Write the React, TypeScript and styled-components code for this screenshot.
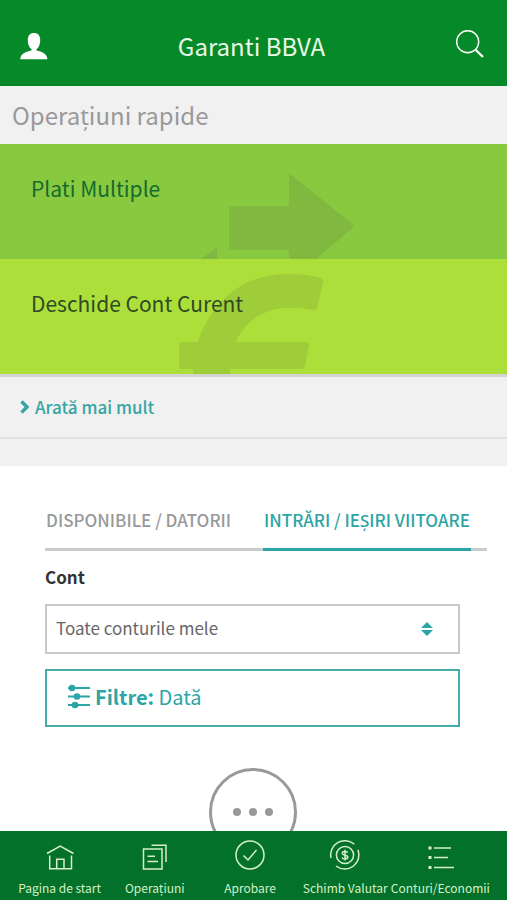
import React from "react";
import styled, { createGlobalStyle } from "styled-components";

const teal = "#2ba5a5";

const GlobalStyle = createGlobalStyle`
  *, *::before, *::after { box-sizing: border-box; }
  body { margin: 0; background: #fff; }
  body, button, select {
    font-family: "Noto Sans CJK SC", "Noto Sans", sans-serif;
  }
  button { border: 0; padding: 0; background: none; cursor: pointer; }
  svg { display: block; }
`;

const Screen = styled.div`
  display: flex;
  flex-direction: column;
  height: 100vh;
`;

const Header = styled.header`
  flex: none;
  display: flex;
  align-items: center;
  justify-content: space-between;
  padding: 27px 20px 21px;
  background: #068a29;
  color: #e9f8e4;
`;

const HeaderTitle = styled.h1`
  margin: 0;
  font-size: 24px;
  line-height: 38px;
  font-weight: 400;
`;

const IconButton = styled.button`
  color: #fff;
`;

const Content = styled.main`
  flex: 1;
  min-height: 0;
  overflow-y: auto;
  scrollbar-width: none;
`;

const SectionTitle = styled.h2`
  margin: 0;
  padding: 12px;
  background: #f1f1f1;
  color: #999;
  font-size: 24px;
  line-height: 34px;
  font-weight: 400;
`;

const Tile = styled.button<{ $bg: string; $ink: string }>`
  position: relative;
  display: flex;
  align-items: flex-start;
  width: 100%;
  height: 115px;
  padding: 29px 31px;
  overflow: hidden;
  background: ${(p) => p.$bg};
  color: ${(p) => p.$ink};
  font-size: 21px;
  line-height: 30px;
  text-align: left;
`;

const TileArt = styled.svg`
  position: absolute;
  top: 0;
  left: 50%;
  transform: translateX(-50%);
`;

const TileLabel = styled.span`
  position: relative;
`;

const MoreBar = styled.div`
  padding: 16px 20px;
  border-top: 3px solid #d3d3d3;
  border-bottom: 2px solid #e2e2e2;
  background: #f1f1f1;
`;

const MoreLink = styled.a`
  display: inline-flex;
  align-items: center;
  gap: 6px;
  color: #36a5a5;
  font-size: 17px;
  line-height: 28px;
  font-weight: 500;
  text-decoration: none;
`;

const Spacer = styled.div`
  height: 27px;
  background: #f1f1f1;
`;

const Accounts = styled.section`
  padding: 36px 20px 0 45px;
`;

const Tabs = styled.div`
  display: flex;
  gap: 31px;
  box-shadow: inset 0 -3px #c9cccc;
`;

const Tab = styled.button<{ $active?: boolean }>`
  padding: 5px 1px 15px;
  border-bottom: 3px solid ${(p) => (p.$active ? teal : "transparent")};
  color: ${(p) => (p.$active ? teal : "#999")};
  font-size: 17px;
  line-height: 26px;
  font-weight: 500;
  white-space: nowrap;
`;

const Form = styled.form`
  display: flex;
  flex-direction: column;
  margin-right: 27px;
`;

const Label = styled.label`
  padding: 13px 0 14px;
  color: #333;
  font-size: 17px;
  line-height: 26px;
  font-weight: 700;
`;

const SelectBox = styled.div`
  position: relative;
`;

const Select = styled.select`
  appearance: none;
  display: block;
  width: 100%;
  height: 50px;
  padding: 0 48px 4px 9px;
  border: 2px solid #c6c9c9;
  border-radius: 0;
  background: #fff;
  color: #666;
  font-size: 17px;
`;

const SelectArrows = styled.svg`
  position: absolute;
  top: 18px;
  right: 27px;
  pointer-events: none;
`;

const FilterButton = styled.button`
  display: flex;
  align-items: center;
  gap: 4px;
  height: 58px;
  margin-top: 15px;
  padding: 0 20px 2px;
  border: 2px solid #45acac;
  color: ${teal};
  font-size: 20px;
  line-height: 30px;
`;

const MoreButton = styled.button`
  display: flex;
  align-items: center;
  justify-content: center;
  gap: 8px;
  width: 88px;
  height: 88px;
  margin: 41px auto 24px;
  border: 3px solid #999;
  border-radius: 50%;
`;

const Dot = styled.span`
  width: 8px;
  height: 8px;
  border-radius: 50%;
  background: #999;
`;

const BottomNav = styled.nav`
  flex: none;
  display: grid;
  grid-template-columns: repeat(5, minmax(0, 1fr));
  padding: 8px 19px 0 12px;
  height: 69px;
  background: #04712a;
`;

const NavItem = styled.a`
  display: flex;
  flex-direction: column;
  align-items: center;
  gap: 7px;
  color: #d5f0c8;
  font-size: 12px;
  line-height: 20px;
  text-decoration: none;
  white-space: nowrap;
`;

const NavIcon = ({ children }: { children: React.ReactNode }) => (
  <svg width="32" height="32" viewBox="0 0 32 32" fill="none" stroke="currentColor" strokeWidth="1.5" aria-hidden="true">
    {children}
  </svg>
);

const navItems = [
  {
    label: "Pagina de start",
    icon: (
      <>
        <path d="M3 14.500 16.200 7l13.300 7.500M5.700 16.500v13.300h21.800V16.500" />
        <path d="M12.700 29.500v-9.300h7.300v9.300" />
      </>
    ),
  },
  {
    label: "Operațiuni",
    icon: (
      <>
        <path d="M4.500 10h18.500v20H4.500zM12.500 6.300H27V23" />
        <path d="M8.500 17.200h7.500M8.500 22.500h10.500" />
      </>
    ),
  },
  {
    label: "Aprobare",
    icon: (
      <>
        <circle cx="16" cy="16" r="14" />
        <path d="m9.500 16.500 4.500 4.500 8.500-10" />
      </>
    ),
  },
  {
    label: "Schimb Valutar",
    icon: (
      <>
        <path d="M2 19A14.200 14.200 0 0 1 25.300 5.300M29 10.700A14.200 14.200 0 0 1 7 27" />
        <circle cx="16" cy="16" r="8.600" />
        <path d="M18.800 13.700c-.6-1-1.600-1.300-2.800-1.300-1.600 0-2.700.7-2.700 1.900 0 2.600 5.500 1.200 5.500 3.800 0 1.200-1.200 1.900-2.800 1.900-1.400 0-2.400-.4-3-1.400M16 10.800v10.700" />
      </>
    ),
  },
  {
    label: "Conturi/Economii",
    icon: (
      <>
        <path d="M10 9h17M10 18.500h14M10 28.500h20" />
        <path d="M4.500 9h3M4.500 18.500h3M4.500 28.500h3" strokeWidth="3" />
      </>
    ),
  },
];

export default function App() {
  return (
    <Screen>
      <GlobalStyle />
      <Header>
        <IconButton aria-label="Profil">
          <svg width="28" height="28" viewBox="0 0 28 28" fill="currentColor">
            <path d="M14 1c-4 0-6.200 2.600-6.200 7.200 0 3.900 1.300 7.200 3.700 9V18.500C6 19.800.6 21.500.2 27.200h27.200C27 21.500 22 19.800 16.500 18.500v-1.300c2.400-1.800 3.700-5.100 3.700-9C20.200 3.600 18 1 14 1z" />
          </svg>
        </IconButton>
        <HeaderTitle>Garanti BBVA</HeaderTitle>
        <IconButton aria-label="Caută">
          <svg width="32" height="32" viewBox="0 0 32 32" fill="none" stroke="currentColor">
            <circle cx="12.700" cy="11.700" r="11" strokeWidth="1.400" />
            <path d="m20.300 19.500 7.700 7.500" strokeWidth="2.400" />
          </svg>
        </IconButton>
      </Header>

      <Content>
        <SectionTitle>Operațiuni rapide</SectionTitle>
        <Tile $bg="#89c940" $ink="#136b2d">
          <TileArt width="200" height="115" viewBox="0 0 200 115" fill="#80b840" aria-hidden="true">
            <path d="M75 62h60V29l66 53-39 33h-27v-9H75zM47 115l16-12v12z" />
          </TileArt>
          <TileLabel>Plati Multiple</TileLabel>
        </Tile>
        <Tile $bg="#addf3a" $ink="#2f4a24">
          <TileArt width="200" height="115" viewBox="0 0 200 115" fill="#9fcc39" aria-hidden="true">
            <path d="M44 83C59 38 94 14 135 15q17 0 32 4 3 1 2 5l-6 25q-1 3-4 2-17-3-29-2C104 51 88 68 82 83h70q4 0 3 4l-4 20q-1 3-4 3H76v5H39v-5H27q-2 0-2-3V86q0-3 3-3z" />
          </TileArt>
          <TileLabel>Deschide Cont Curent</TileLabel>
        </Tile>
        <MoreBar>
          <MoreLink href="#operatiuni">
            <svg width="9" height="14" viewBox="0 0 9 14" fill="none" stroke="currentColor" strokeWidth="3.400" aria-hidden="true">
              <path d="m1.500 1.500 5.500 5.500-5.500 5.500" />
            </svg>
            Arată mai mult
          </MoreLink>
        </MoreBar>
        <Spacer />

        <Accounts>
          <Tabs role="tablist">
            <Tab role="tab" aria-selected={false}>DISPONIBILE / DATORII</Tab>
            <Tab role="tab" aria-selected $active>INTRĂRI / IEȘIRI VIITOARE</Tab>
          </Tabs>
          <Form>
            <Label htmlFor="cont">Cont</Label>
            <SelectBox>
              <Select id="cont">
                <option>Toate conturile mele</option>
              </Select>
              <SelectArrows width="12" height="14" viewBox="0 0 12 14" fill={teal} aria-hidden="true">
                <path d="M6 0l6 6H0zM6 14l6-6H0z" />
              </SelectArrows>
            </SelectBox>
            <FilterButton type="button">
              <svg width="24" height="26" viewBox="0 0 24 26" fill="currentColor" aria-hidden="true">
                <path d="M1 3h22v2H1zM1 11.500h22v2H1zM1 20h22v2H1z" />
                <circle cx="5" cy="4" r="3.300" />
                <circle cx="10" cy="12.500" r="3.300" />
                <circle cx="8" cy="21" r="3.300" />
              </svg>
              <span>
                <b>Filtre:</b> Dată
              </span>
            </FilterButton>
            <MoreButton type="button" aria-label="Mai multe">
              <Dot />
              <Dot />
              <Dot />
            </MoreButton>
          </Form>
        </Accounts>
      </Content>

      <BottomNav>
        {navItems.map((item) => (
          <NavItem key={item.label} href="#">
            <NavIcon>{item.icon}</NavIcon>
            <span>{item.label}</span>
          </NavItem>
        ))}
      </BottomNav>
    </Screen>
  );
}
